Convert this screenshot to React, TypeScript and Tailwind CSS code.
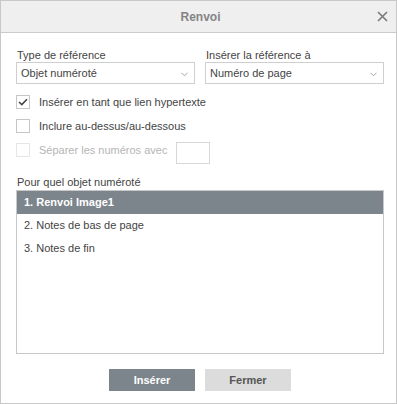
import React from "react";

const font = { fontFamily: '"Liberation Sans", Arial, sans-serif' };

function Chevron() {
  return (
    <svg width="7" height="5" viewBox="0 0 7 5" className="absolute right-[6px] top-[9px]">
      <path d="M0.5 0.8 L3.5 3.8 L6.5 0.8" fill="none" stroke="#9a9a9a" strokeWidth="0.9" />
    </svg>
  );
}

function Select({ value }: { value: string }) {
  return (
    <div className="relative w-[179px] h-[22px] border border-[#cfcfcf] bg-white flex items-center pl-[4px] text-[11px] text-[#444]">
      {value}
      <Chevron />
    </div>
  );
}

function Check({ checked, disabled }: { checked?: boolean; disabled?: boolean }) {
  return (
    <div
      className={
        "w-[14px] h-[14px] border bg-white flex items-center justify-center shrink-0 " +
        (disabled ? "border-[#e6e6e6]" : "border-[#c6c6c6]")
      }
    >
      {checked && (
        <svg width="10" height="8" viewBox="0 0 10 8">
          <path d="M1 4 L3.8 6.6 L9 1.2" fill="none" stroke="#444" strokeWidth="1.6" />
        </svg>
      )}
    </div>
  );
}

export default function App() {
  return (
    <div style={font} className="w-[397px] h-[404px] border border-[#c8c8c8] bg-white flex flex-col text-[#444]">
      <div className="relative h-[32px] border-b border-[#cbcbcb] bg-[#efefef] flex items-center justify-center shrink-0">
        <span className="text-[12px] font-bold text-[#848484] ml-[4px]">Renvoi</span>
        <svg width="11" height="11" viewBox="0 0 11 11" className="absolute left-[376px] top-[10px]">
          <path d="M1 1 L10 10 M10 1 L1 10" stroke="#7a7a7a" strokeWidth="1.6" />
        </svg>
      </div>
      <div className="flex flex-col pl-[15px] pr-[12px] pt-[15px]">
        <div className="flex gap-[10px]">
          <div className="flex flex-col">
            <div className="h-[14px] leading-[14px] text-[11px] pl-[1px]">Type de référence</div>
            <Select value="Objet numéroté" />
          </div>
          <div className="flex flex-col">
            <div className="h-[14px] leading-[14px] text-[11px] pl-[1px]">Insérer la référence à</div>
            <Select value="Numéro de page" />
          </div>
        </div>
        <div className="mt-[11px] h-[14px] flex items-center gap-[9px] text-[11px]">
          <Check checked />
          <span>Insérer en tant que lien hypertexte</span>
        </div>
        <div className="mt-[10px] h-[14px] flex items-center gap-[9px] text-[11px]">
          <Check />
          <span>Inclure au-dessus/au-dessous</span>
        </div>
        <div className="mt-[9px] h-[22px] flex items-start gap-[9px] text-[11px] text-[#b5b5b5]">
          <div className="mt-[1px] flex items-center gap-[9px] h-[14px]">
            <Check disabled />
            <span>Séparer les numéros avec</span>
          </div>
          <div className="w-[34px] h-[22px] border border-[#d8d8d8] bg-white" />
        </div>
        <div className="mt-[11px] h-[15px] leading-[14px] text-[11px] pl-[1px]">Pour quel objet numéroté</div>
        <div className="h-[164px] border border-[#c8c8c8] bg-white flex flex-col text-[11px]">
          <div className="h-[23px] bg-[#7d858c] text-white font-bold flex items-center pl-[7px]">1. Renvoi Image1</div>
          <div className="h-[23px] flex items-center pl-[7px]">2. Notes de bas de page</div>
          <div className="h-[23px] flex items-center pl-[7px]">3. Notes de fin</div>
        </div>
        <div className="mt-[15px] flex justify-center gap-[10px] text-[11px] font-bold">
          <div className="w-[86px] h-[22px] bg-[#7d858c] text-white flex items-center justify-center">Insérer</div>
          <div className="w-[86px] h-[22px] bg-[#dcdcdc] text-[#555] flex items-center justify-center">Fermer</div>
        </div>
      </div>
    </div>
  );
}
